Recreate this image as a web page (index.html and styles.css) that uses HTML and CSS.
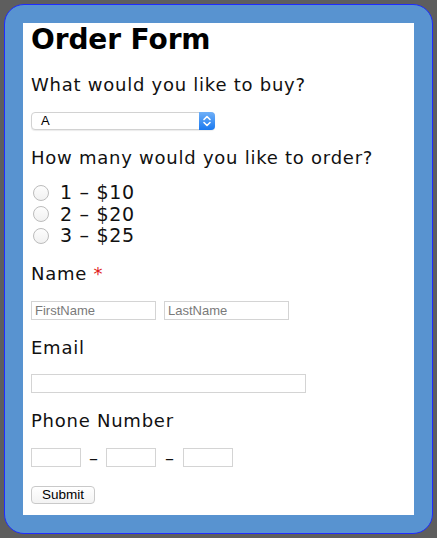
FILE: index.html
```html
<!DOCTYPE html>
<html>
<head>
<meta charset="utf-8">
<link rel="stylesheet" href="styles.css">
</head>
<body>
<div class="frame">
  <form class="sheet">
    <h1 class="title">Order Form</h1>
    <p class="q q-buy">What would you like to buy?</p>
    <div class="select">
      <span class="select-value">A</span>
      <span class="select-arrows">
        <svg width="10" height="14" viewBox="0 0 10 14"><path d="M2 5.5 L5 2.5 L8 5.5 M2 8.5 L5 11.5 L8 8.5" fill="none" stroke="#fff" stroke-width="1.6" stroke-linecap="round" stroke-linejoin="round"/></svg>
      </span>
    </div>
    <p class="q q-qty">How many would you like to order?</p>
    <div class="radios">
      <label class="radio"><span class="dot"></span>1 – $10</label>
      <label class="radio"><span class="dot"></span>2 – $20</label>
      <label class="radio"><span class="dot"></span>3 – $25</label>
    </div>
    <p class="q q-name">Name <span class="req">*</span></p>
    <div class="row names">
      <input class="field name" type="text" placeholder="FirstName">
      <input class="field name" type="text" placeholder="LastName">
    </div>
    <p class="q q-email">Email</p>
    <input class="field email" type="text">
    <p class="q q-phone">Phone Number</p>
    <div class="row phone">
      <input class="field part" type="text">
      <span class="dash">–</span>
      <input class="field part" type="text">
      <span class="dash dash-2">–</span>
      <input class="field part" type="text">
    </div>
    <button class="submit" type="button">Submit</button>
  </form>
</div>
</body>
</html>
```

FILE: styles.css
```css
html, body {
  margin: 0;
  padding: 0;
}
body {
  background: #5e5e5e;
  width: 437px;
  height: 538px;
  overflow: hidden;
  font-family: "DejaVu Sans", "Liberation Sans", sans-serif;
  color: #111;
}
.frame {
  margin: 4px 0 0 4px;
  width: 429px;
  height: 530px;
  box-sizing: border-box;
  border: 1px solid #1f2cff;
  border-radius: 20px;
  background: #5893d0;
  padding: 18px;
}
.sheet {
  background: #fff;
  height: 492px;
  width: 391px;
  box-sizing: border-box;
  padding: 0 8px;
  display: flex;
  flex-direction: column;
  align-items: flex-start;
}
.title {
  margin: 0;
  font-size: 28px;
  line-height: 34px;
  font-weight: bold;
  letter-spacing: -0.1px;
  color: #000;
}
.q {
  margin: 0;
  font-size: 18px;
  line-height: 22px;
  letter-spacing: 0.75px;
  color: #111;
}
.q-buy { margin-top: 17px; }
.q-qty { margin-top: 17px; }
.q-name { margin-top: 16px; }
.q-email { margin-top: 17px; }
.q-phone { margin-top: 17px; }
.req { color: #e0201b; }

.select {
  margin-top: 16px;
  width: 184px;
  height: 18px;
  box-sizing: border-box;
  border: 1px solid #d2d2d2;
  border-radius: 4px;
  display: flex;
  align-items: center;
  box-shadow: 0 1px 1px rgba(0,0,0,0.08);
  background: #fff;
}
.select-value {
  flex: 1;
  padding-left: 9px;
  font-family: "Liberation Sans", Arial, sans-serif;
  font-size: 13px;
  line-height: 16px;
  color: #000;
}
.select-arrows {
  width: 16px;
  height: 18px;
  margin: -1px -1px -1px 0;
  border-radius: 0 4px 4px 0;
  background: linear-gradient(#6fb0f8, #1a79f0);
  display: flex;
  align-items: center;
  justify-content: center;
}

.radios {
  margin-top: 13px;
  display: flex;
  flex-direction: column;
}
.radio {
  display: flex;
  align-items: center;
  height: 21.5px;
  font-size: 19px;
  line-height: 21.5px;
  letter-spacing: 0.7px;
  color: #111;
}
.dot {
  width: 16px;
  height: 16px;
  box-sizing: border-box;
  border: 1px solid #bcbcbc;
  border-radius: 50%;
  margin: 0 11px 0 2px;
  background: linear-gradient(#fdfdfd, #f1f1f1);
}

.row {
  display: flex;
  align-items: center;
}
.names {
  margin-top: 16px;
  gap: 8px;
}
.field {
  margin: 0;
  height: 19px;
  box-sizing: border-box;
  border: 1px solid #d4d4d4;
  padding: 0 3px;
  font-family: "Liberation Sans", Arial, sans-serif;
  font-size: 13px;
  color: #222;
  background: #fff;
  outline: none;
}
.field::placeholder { color: #7a7a7a; }
.name { width: 125px; }
.email {
  margin-top: 15px;
  width: 275px;
}
.phone {
  margin-top: 16px;
  gap: 8px;
}
.part { width: 50px; }
.dash {
  font-size: 18px;
  line-height: 19px;
  color: #111;
  width: 9px;
}
.dash-2 {
  margin: 0 1px;
}
.submit {
  margin-top: 19px;
  width: 64px;
  height: 18px;
  padding: 0;
  box-sizing: border-box;
  border: 1px solid #c9c9c9;
  border-radius: 4px;
  background: linear-gradient(#ffffff, #f3f3f3);
  font-family: "Liberation Sans", Arial, sans-serif;
  font-size: 13.5px;
  line-height: 16px;
  color: #000;
}
```
